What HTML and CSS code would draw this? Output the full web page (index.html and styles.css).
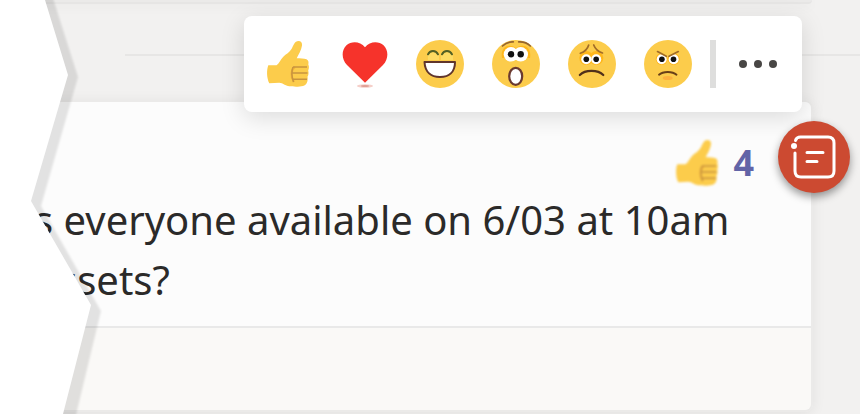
FILE: index.html
```html
<!DOCTYPE html>
<html lang="en">
<head>
<meta charset="utf-8">
<title>Channel conversation</title>
<link rel="stylesheet" href="styles.css">
</head>
<body>
<main class="feed">
  <div class="previous"></div>
  <hr class="divider">
  <article class="card">
    <div class="message">
      <div class="reaction">
        <svg class="emoji soft" viewBox="0 0 48 48" aria-hidden="true"><use href="#thumb"/></svg>
        <span class="count">4</span>
      </div>
      <p class="line">s everyone available on 6/03 at 10am</p>
      <p class="line continued">ssets?</p>
    </div>
    <div class="reply"></div>
  </article>
</main>

<div class="toolbar" role="toolbar" aria-label="Reactions">
  <button class="react" aria-label="Like">
    <svg class="emoji" viewBox="0 0 48 48">
      <g id="thumb">
        <path fill="#fccc4b" d="M4.3 25.3H12.5C15 23.5 16.5 19.5 19.3 16.7C22 14 25.5 12.5 27.5 9C29.5 5.5 30.5 1 34.5 1C37 1 38.4 3 38 5.500C37.5 10 34.500 14.500 32.700 18.300C36 18.500 40 18.300 42.500 19.300C44.500 20.300 44.800 22 44.300 24.500C45.300 26.500 45 28.500 44.200 30.500C44.900 33 44.500 35 43.500 36.800C44.200 41 43 45 39 46C35 47 29 46.700 25.500 46.300C21 45.700 19 43 15.300 42.700L5.300 43.300C2.600 38 2.500 30 4.300 25.300Z"/>
        <path fill="none" stroke="#f3b33b" stroke-width="2" d="M31 27C27 30 26 36 30 42"/>
        <path fill="none" stroke="#c8943f" stroke-width="1.500" d="M29 27H43M28 33H43.500M29 39.300H43M29 27Q26.500 33 29.500 42"/>
      </g>
    </svg>
  </button>
  <button class="react" aria-label="Heart">
    <svg class="emoji" viewBox="0 0 48 48">
      <path fill="#f6332b" d="M25 42.700L7 25C1.500 19.500 1.200 10.500 6.200 5.500C11.500.7 20 1 25 7.300C30 1 38.500.7 43.800 5.500C48.800 10.500 48.500 19.500 43 25Z"/>
      <ellipse cx="25" cy="46" rx="8" ry="1.700" fill="#f5cfc9"/><ellipse cx="25" cy="46" rx="4" ry="1" fill="#dfa096"/>
    </svg>
  </button>
  <button class="react" aria-label="Laugh">
    <svg class="emoji" viewBox="0 0 48 48">
      <circle cx="24" cy="24" r="24" fill="#fccc4b"/>
      <path fill="#fddb62" d="M12 15Q17 9 23 15V20H12ZM25 15Q31 9 37 15V20H25Z"/>
      <path fill="none" stroke="#526024" stroke-width="2" stroke-linecap="round" d="M12 14.300C14 10 20 10 22 14.300M26 14.300C28 10 34 10 36 14.300"/>
      <path fill="#fff" stroke="#60352c" stroke-width="2" stroke-linejoin="round" d="M8.500 22H39C39 32 33 37 24 37C15 37 9 32 8.500 22Z"/>
    </svg>
  </button>
  <button class="react" aria-label="Surprised">
    <svg class="emoji" viewBox="0 0 48 48">
      <circle cx="24" cy="24" r="24" fill="#fccc4b"/>
      <path fill="#ffb71c" d="M10 18C8 7 17 3 24 8C31 3 40 7 38 18Z"/>
      <path fill="none" stroke="#95642f" stroke-width="1.700" stroke-linecap="round" d="M10.500 6Q15 1.500 21.300 1.900M26.700 1.900Q34 1.500 38.300 6"/>
      <circle cx="19" cy="14.300" r="7.300" fill="#fff"/><circle cx="28.700" cy="14.300" r="7.300" fill="#fff"/>
      <circle cx="19" cy="14.300" r="3.200" fill="#111"/><circle cx="28.700" cy="14.300" r="3.200" fill="#111"/>
      <ellipse cx="23.700" cy="36.300" rx="6.500" ry="8.500" fill="#fff" stroke="#6b3a30" stroke-width="2.200"/>
    </svg>
  </button>
  <button class="react" aria-label="Sad">
    <svg class="emoji" viewBox="0 0 48 48">
      <circle cx="24" cy="24" r="24" fill="#fccc4b"/>
      <circle cx="18.300" cy="18" r="7" fill="#ffb71c"/><circle cx="28.300" cy="18" r="7" fill="#ffb71c"/>
      <path fill="none" stroke="#a16c27" stroke-width="1.700" stroke-linecap="round" d="M12.300 13.300Q19 11 20.700 5M25.700 5Q28 11 34.500 13"/>
      <circle cx="18.300" cy="19.200" r="5" fill="#fff"/><circle cx="28.200" cy="19.200" r="5" fill="#fff"/>
      <circle cx="18.300" cy="19.200" r="2.800" fill="#111"/><circle cx="28.200" cy="19.200" r="2.800" fill="#111"/>
      <path fill="none" stroke="#51301a" stroke-width="2.200" stroke-linecap="round" d="M11.800 35C17 29.500 30 29.500 35.300 35"/>
    </svg>
  </button>
  <button class="react" aria-label="Angry">
    <svg class="emoji" viewBox="0 0 48 48">
      <circle cx="24" cy="24" r="24" fill="#fccc4b"/>
      <circle cx="17.700" cy="19" r="6" fill="#ffb71c"/><circle cx="29.700" cy="19" r="6" fill="#ffb71c"/>
      <circle cx="17.700" cy="19.300" r="5" fill="#fff"/><circle cx="29.700" cy="19.300" r="5" fill="#fff"/>
      <circle cx="17.900" cy="19.300" r="2.800" fill="#111"/><circle cx="29.500" cy="19.300" r="2.800" fill="#111"/>
      <path fill="#fccc4b" d="M12 10.500L22 16.500L25 16.500L35 10.500V8H12Z"/>
      <path fill="none" stroke="#a16c27" stroke-width="1.700" stroke-linecap="round" d="M13.500 11.600L22.300 16.300M25 16.300L34.300 11.600"/>
      <path fill="none" stroke="#694018" stroke-width="1.900" stroke-linecap="round" d="M15 34.700C19 31 28.500 31 32.500 34.700"/>
      <ellipse cx="23.700" cy="38" rx="5" ry="2" fill="#fdb13e"/>
    </svg>
  </button>
  <span class="separator"></span>
  <button class="more" aria-label="More options">
    <svg class="dots" viewBox="0 0 40 10"><g fill="#484644"><circle cx="5" cy="5" r="4"/><circle cx="20" cy="5" r="4"/><circle cx="35" cy="5" r="4"/></g></svg>
  </button>
</div>

<button class="capture" aria-label="Create note">
  <svg class="note" viewBox="0 0 48 48" fill="none" stroke="#fff" stroke-width="3" stroke-linecap="round">
    <path d="M5.500 7.500Q6.500 4 10.500 4H38Q44 4 44 10V38Q44 44 38 44H11Q5 44 5 38V20"/>
    <path d="M17 19.500H33M17 28.500H27"/>
    <circle cx="4" cy="13" r="3" fill="#fff" stroke="none"/>
  </svg>
</button>

<svg class="tear" viewBox="0 0 110 414" aria-hidden="true">
  <path class="tear-shadow" d="M-20 -30H44L78 77L41 206L101 311L70 440H-20Z"/>
  <path fill="#fff" d="M0 0H45L68 75L31 201L91 305L63 414H0Z"/>
</svg>
</body>
</html>
```
FILE: styles.css
```css
* {
  box-sizing: border-box;
}

body {
  position: relative;
  margin: 0;
  min-height: 100vh;
  overflow: hidden;
  background: #f2f1f0;
  color: #2b2a29;
  font-family: "Noto Sans", "Open Sans", sans-serif;
}

button {
  display: flex;
  align-items: center;
  justify-content: center;
  margin: 0;
  padding: 0;
  border: 0;
  background: none;
}

.previous {
  height: 4px;
  margin-right: 48px;
  background: #ebeae9;
  border-bottom: 2px solid #e6e5e4;
  border-bottom-right-radius: 4px;
  box-shadow: 0 2px 12px rgba(0, 0, 0, 0.06);
}

.divider {
  height: 2px;
  margin: 50px 0 44px 125px;
  border: 0;
  background: #e7e6e5;
}

.card {
  margin-right: 47px;
  border: 2px solid #ebeae9;
  border-left: 0;
  border-radius: 0 8px 8px 0;
  box-shadow: 0 2px 14px rgba(0, 0, 0, 0.07);
  overflow: hidden;
}

.message {
  padding: 34px 57px 16px 34px;
  background: #fcfcfc;
}

.reaction {
  display: flex;
  align-items: center;
  justify-content: flex-end;
  gap: 12px;
  height: 54px;
}

.count {
  color: #6264a7;
  font-size: 36px;
  font-weight: 700;
  line-height: 54px;
}

.line {
  margin: 0;
  font-size: 40px;
  line-height: 60px;
  white-space: nowrap;
}

.continued {
  padding-left: 24px;
}

.reply {
  height: 84px;
  border-top: 2px solid #e9e9e9;
  background: #faf9f7;
}

.toolbar {
  position: absolute;
  top: 16px;
  right: 58px;
  display: flex;
  align-items: center;
  gap: 28px;
  padding: 24px 24px 24px 20px;
  border-radius: 8px;
  background: #fff;
  box-shadow: 0 6px 24px rgba(0, 0, 0, 0.13);
}

.emoji {
  display: block;
  width: 48px;
  height: 48px;
}

.soft {
  filter: blur(1px);
}

.separator {
  width: 6px;
  height: 48px;
  margin-left: -10px;
  background: #dededd;
}

.more {
  margin-left: -6px;
}

.dots {
  width: 40px;
  height: 10px;
}

.capture {
  position: absolute;
  top: 121px;
  right: 10px;
  width: 72px;
  height: 72px;
  border-radius: 50%;
  background: #cc4a31;
  box-shadow: 0 4px 8px rgba(0, 0, 0, 0.4);
}

.note {
  width: 48px;
  height: 48px;
}

.tear {
  position: absolute;
  top: 0;
  left: 0;
  width: 110px;
  height: 414px;
}

.tear-shadow {
  fill: rgba(0, 0, 0, 0.1);
  filter: blur(1px);
}
```
